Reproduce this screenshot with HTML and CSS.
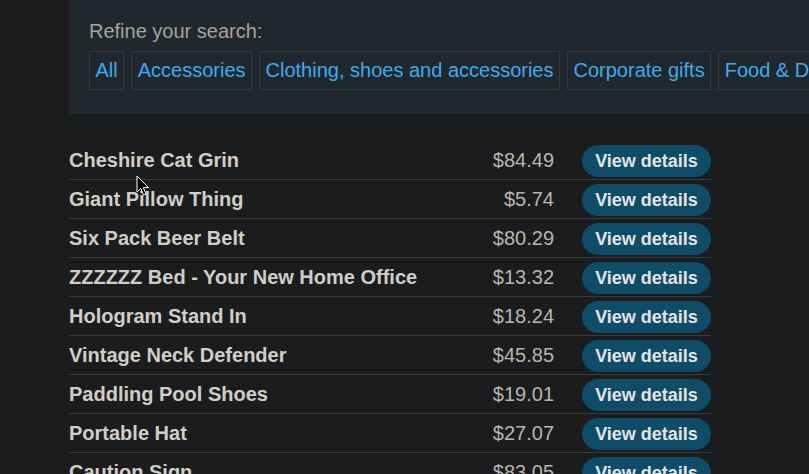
FILE: index.html
```html
<!DOCTYPE html>
<html>
<head>
<meta charset="utf-8">
<link rel="stylesheet" href="styles.css">
</head>
<body>
<div class="page">
  <section class="refine">
    <div class="refine-label">Refine your search:</div>
    <div class="chips">
      <a class="chip">All</a>
      <a class="chip">Accessories</a>
      <a class="chip">Clothing, shoes and accessories</a>
      <a class="chip">Corporate gifts</a>
      <a class="chip">Food &amp; Drink</a>
    </div>
  </section>
  <div class="products">
    <div class="row"><span class="name">Cheshire Cat Grin</span><span class="price">$84.49</span><a class="btn">View details</a></div>
    <div class="row"><span class="name">Giant Pillow Thing</span><span class="price">$5.74</span><a class="btn">View details</a></div>
    <div class="row"><span class="name">Six Pack Beer Belt</span><span class="price">$80.29</span><a class="btn">View details</a></div>
    <div class="row"><span class="name">ZZZZZZ Bed - Your New Home Office</span><span class="price">$13.32</span><a class="btn">View details</a></div>
    <div class="row"><span class="name">Hologram Stand In</span><span class="price">$18.24</span><a class="btn">View details</a></div>
    <div class="row"><span class="name">Vintage Neck Defender</span><span class="price">$45.85</span><a class="btn">View details</a></div>
    <div class="row"><span class="name">Paddling Pool Shoes</span><span class="price">$19.01</span><a class="btn">View details</a></div>
    <div class="row"><span class="name">Portable Hat</span><span class="price">$27.07</span><a class="btn">View details</a></div>
    <div class="row"><span class="name">Caution Sign</span><span class="price">$83.05</span><a class="btn">View details</a></div>
  </div>
</div>
<svg class="cursor" width="14" height="22" viewBox="0 0 14 22">
  <path d="M1 1 L1 17 L4.8 13.4 L7.6 20 L10 19 L7.3 12.6 L12.5 12.6 Z" fill="#000" stroke="#fff" stroke-width="1"/>
</svg>
</body>
</html>
```
FILE: styles.css
```css
html, body {
  margin: 0;
  padding: 0;
  background: #1b1c1e;
  overflow: hidden;
  font-family: "Liberation Sans", Arial, sans-serif;
}
.page {
  padding-left: 69px;
  width: 900px;
}
.refine {
  background: #1f282d;
  padding: 20px 20px 24px 20px;
  width: 800px;
  box-sizing: border-box;
}
.refine-label {
  color: #a8a399;
  font-size: 20px;
  line-height: 23px;
  margin-bottom: 8px;
}
.chips {
  display: flex;
  gap: 7px;
  flex-wrap: nowrap;
  white-space: nowrap;
}
.chip {
  border: 1px solid #333a3d;
  padding: 7px 5.5px;
  color: #3faaf0;
  font-size: 20px;
  line-height: 23px;
}
.products {
  width: 642px;
  margin-top: 27px;
}
.row {
  display: grid;
  grid-template-columns: 1fr auto auto;
  column-gap: 28px;
  align-items: center;
  height: 38px;
  border-bottom: 1px solid #3a3c3e;
}
.name {
  color: #d1cdc7;
  font-weight: bold;
  font-size: 20px;
  line-height: 23px;
}
.price {
  color: #bab5ae;
  font-size: 20px;
  line-height: 23px;
  text-align: right;
}
.btn {
  display: block;
  margin-top: 2px;
  width: 129px;
  box-sizing: border-box;
  height: 32px;
  line-height: 32px;
  border-radius: 16px;
  background: #0e4c67;
  color: #e4e4e4;
  font-weight: bold;
  font-size: 18px;
  text-align: center;
}
.cursor {
  position: absolute;
  left: 136px;
  top: 175px;
}
```
